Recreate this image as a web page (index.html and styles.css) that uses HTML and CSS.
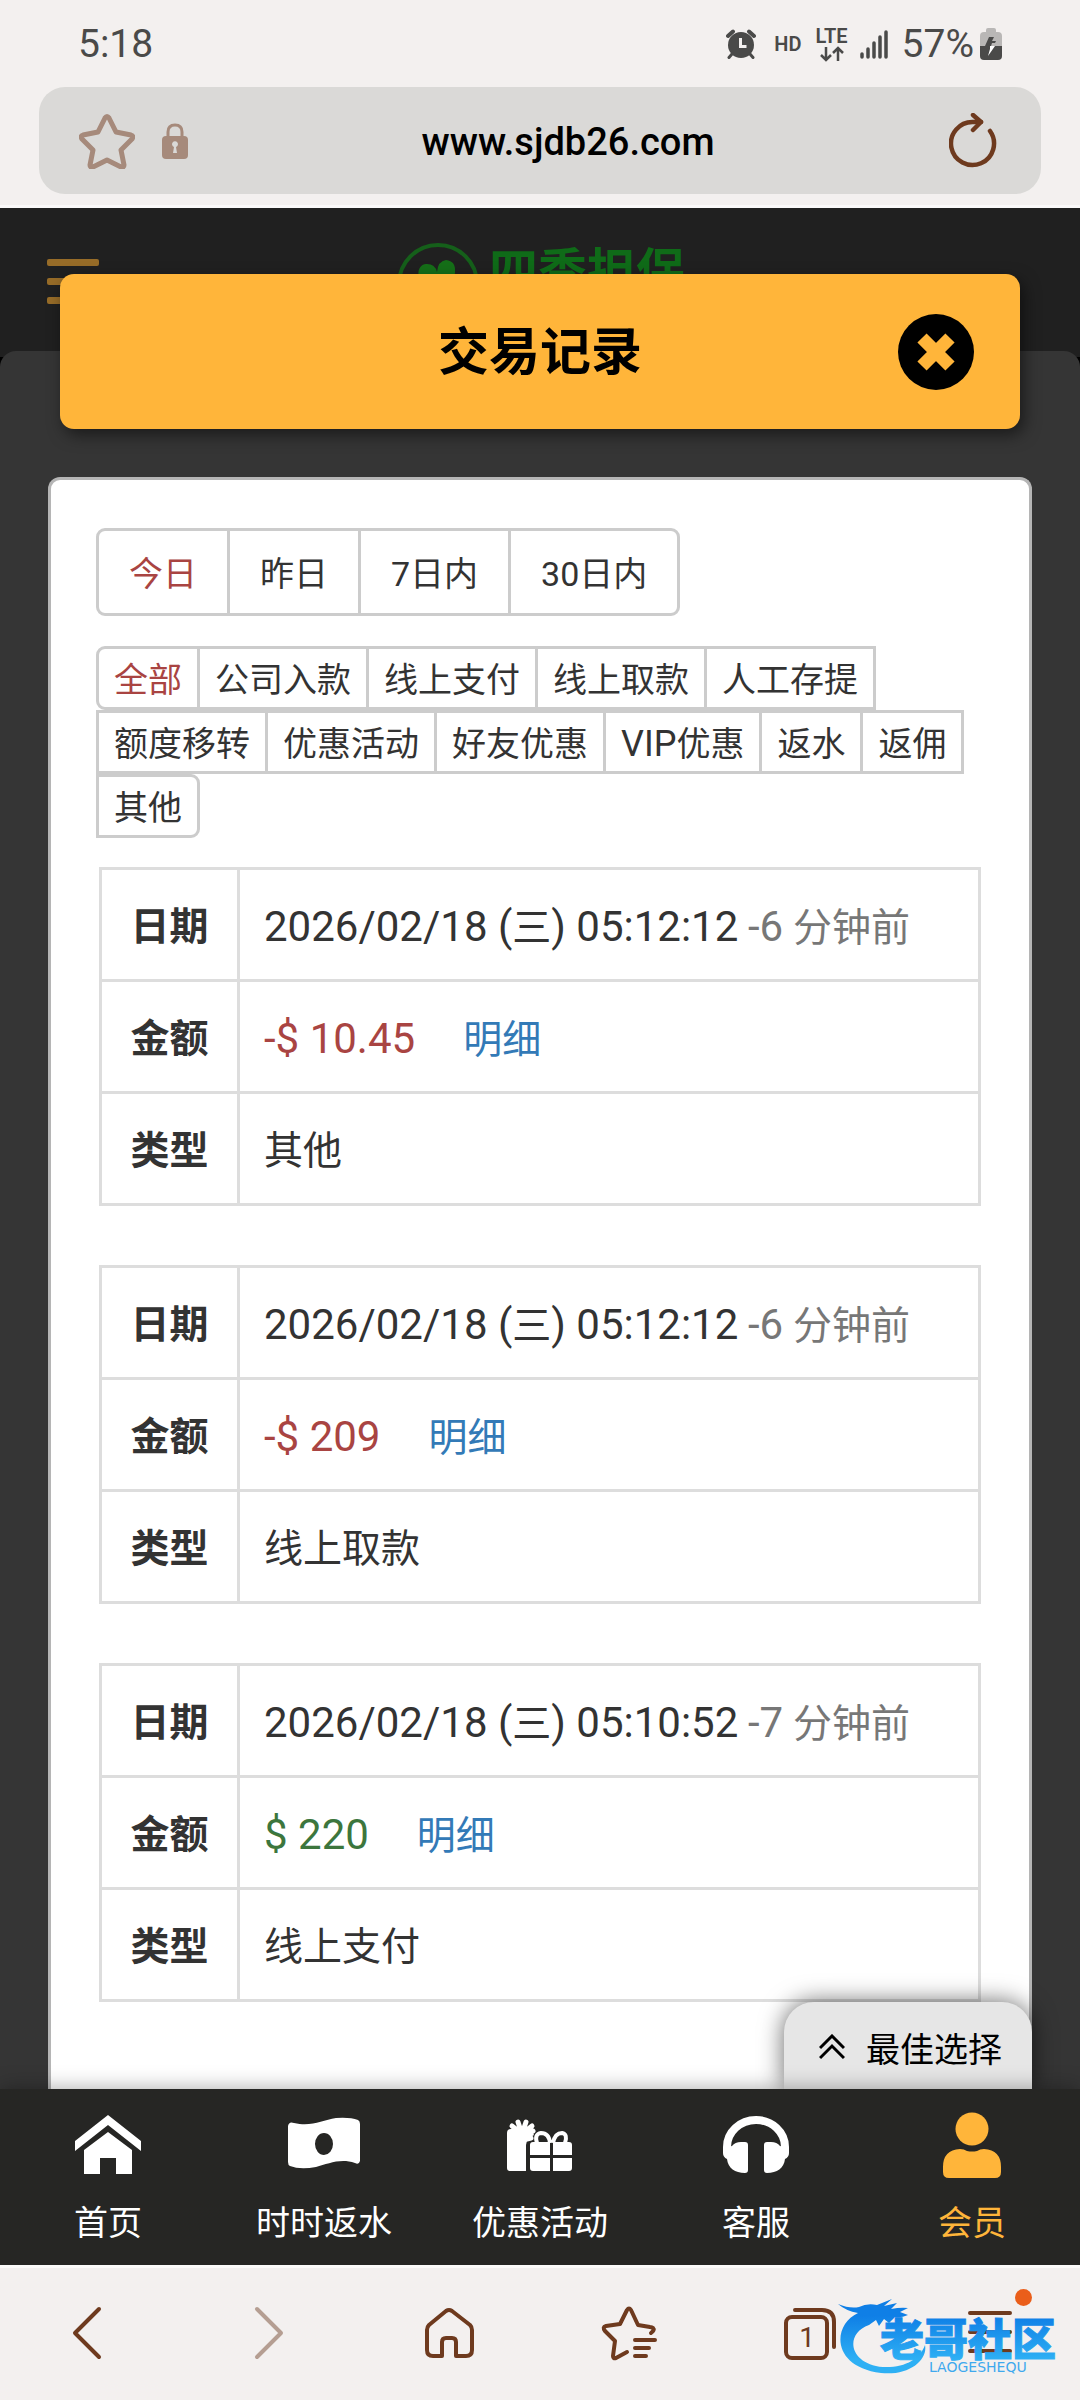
FILE: index.html
```html
<!DOCTYPE html>
<html lang="zh-CN">
<head>
  <meta charset="UTF-8">
  <meta name="viewport" content="width=device-width, initial-scale=1">
  <title>交易记录</title>
  <link rel="stylesheet" href="styles.css">
</head>
<body>
  <header class="browser-top">
    <div class="status-bar">
      <span class="clock">5:18</span>
      <div class="status-icons">
        <svg class="alarm" width="30" height="30" viewBox="0 0 30 30">
          <circle cx="15" cy="16" r="13" fill="#4a4a49"/>
          <path d="M2 7l5-4.500M28 7l-5-4.500" stroke="#4a4a49" stroke-width="4" stroke-linecap="round"/>
          <path d="M6 25l-3 3.500M24 25l3 3.500" stroke="#4a4a49" stroke-width="3" stroke-linecap="round"/>
          <path d="M14.500 9v8.500h6" fill="none" stroke="#f3f0ef" stroke-width="3"/>
        </svg>
        <span class="net">HD</span>
        <div class="lte">
          <span class="net">LTE</span>
          <svg width="26" height="16" viewBox="0 0 26 16" fill="none" stroke="#4a4a49" stroke-width="2.500">
            <path d="M7 1v13M2 9l5 5 5-5M19 15V2M14 7l5-5 5 5"/>
          </svg>
        </div>
        <svg class="signal" width="28" height="30" viewBox="0 0 28 30" stroke="#4a4a49" stroke-width="3.500" stroke-linecap="round">
          <path d="M2 25v3M8 20v8M14 14v14M20 8v20M26 3v25"/>
        </svg>
        <span class="percent">57%</span>
        <svg width="22" height="32" viewBox="0 0 22 32">
          <path d="M6 4V2q0-2 2-2h6q2 0 2 2v2h2q4 0 4 4v10H0V8q0-4 4-4z" fill="#b9b7b6"/>
          <path d="M0 18h22v10q0 4-4 4H4q-4 0-4-4z" fill="#4a4a49"/>
          <path d="M9 9l-4 9h6l1-3h3l1-2h-4l2-4z" fill="#4a4a49"/>
          <path d="M10 18h5l-7 10 2-7z" fill="#fff"/>
        </svg>
      </div>
    </div>
    <div class="address-bar">
      <button class="icon-btn" aria-label="收藏">
        <svg width="56" height="56" viewBox="0 0 56 56" fill="none" stroke="#a68a7b" stroke-width="5" stroke-linejoin="round">
          <path d="M26 5q2-3 4 0l7 14 15 3q3 1 1 4L42 37l3 15q0 3-3 2l-14-7-14 7q-3 1-3-2l3-15L3 26q-2-3 1-4l15-3z"/>
        </svg>
      </button>
      <svg class="lock" width="26" height="36" viewBox="0 0 26 36">
        <path d="M6 15V9q0-7 7-7t7 7v6" fill="none" stroke="#a68a7b" stroke-width="3"/>
        <rect y="13" width="26" height="23" rx="4" fill="#a68a7b"/>
        <path d="M11 30l1-6a3 3 0 1 1 2 0l1 6z" fill="#dad9d7"/>
      </svg>
      <input class="url" type="text" value="www.sjdb26.com" aria-label="网址">
      <button class="icon-btn" aria-label="刷新">
        <svg width="50" height="56" viewBox="0 0 50 56" fill="none" stroke="#6e3a1e" stroke-width="4.500" stroke-linecap="round" stroke-linejoin="round">
          <path d="M41 18a21.500 21.500 0 1 1-17-9h8"/><path d="M24 2l8 7-8 8"/>
        </svg>
      </button>
    </div>
  </header>

  <main class="site">
    <!-- 弹窗后面的页面 -->
    <div class="backdrop">
      <div class="site-header">
        <div class="burger"><i></i><i></i><i></i></div>
        <div class="logo">
          <svg width="82" height="82" viewBox="0 0 82 82">
            <circle cx="41" cy="41" r="39" fill="none" stroke="#155f1a" stroke-width="4"/>
            <path d="M41 46C16 44 18 20 30 21q8 0 10 8 1-11 9-12 10 1 9 12 0 4-2 5 8 6 0 14-10 6-15-2z" fill="#156f18"/>
          </svg>
          <span>四季担保</span>
        </div>
      </div>
      <div class="site-body"></div>
    </div>

    <section class="modal">
      <div class="modal-title">
        <h1>交易记录</h1>
        <button class="close" aria-label="关闭">
          <svg width="76" height="76" viewBox="0 0 76 76">
            <circle cx="38" cy="38" r="38"/>
            <path d="M24 24l28 28M52 24L24 52" stroke="#ffb53a" stroke-width="13"/>
          </svg>
        </button>
      </div>

      <div class="panel">
        <div class="btn-group period">
          <button class="btn active">今日</button>
          <button class="btn">昨日</button>
          <button class="btn">7日内</button>
          <button class="btn">30日内</button>
        </div>
        <div class="btn-group types">
          <button class="btn active">全部</button>
          <button class="btn">公司入款</button>
          <button class="btn">线上支付</button>
          <button class="btn">线上取款</button>
          <button class="btn">人工存提</button>
          <button class="btn">额度移转</button>
          <button class="btn">优惠活动</button>
          <button class="btn">好友优惠</button>
          <button class="btn"><span class="latin">VIP</span>优惠</button>
          <button class="btn">返水</button>
          <button class="btn">返佣</button>
          <button class="btn">其他</button>
        </div>

        <table class="record">
          <tr><th>日期</th><td><span class="num">2026/02/18 (</span>三<span class="num">) 05:12:12</span> <span class="ago"><span class="num">-6</span> 分钟前</span></td></tr>
          <tr><th>金额</th><td><span class="num minus">-$ 10.45</span><a class="detail" href="#">明细</a></td></tr>
          <tr><th>类型</th><td>其他</td></tr>
        </table>
        <table class="record">
          <tr><th>日期</th><td><span class="num">2026/02/18 (</span>三<span class="num">) 05:12:12</span> <span class="ago"><span class="num">-6</span> 分钟前</span></td></tr>
          <tr><th>金额</th><td><span class="num minus">-$ 209</span><a class="detail" href="#">明细</a></td></tr>
          <tr><th>类型</th><td>线上取款</td></tr>
        </table>
        <table class="record">
          <tr><th>日期</th><td><span class="num">2026/02/18 (</span>三<span class="num">) 05:10:52</span> <span class="ago"><span class="num">-7</span> 分钟前</span></td></tr>
          <tr><th>金额</th><td><span class="num plus">$ 220</span><a class="detail" href="#">明细</a></td></tr>
          <tr><th>类型</th><td>线上支付</td></tr>
        </table>
      </div>
    </section>

    <button class="best">
      <svg width="26" height="26" viewBox="0 0 26 26" fill="none" stroke="#000" stroke-width="3">
        <path d="M1 14L13 2l12 12M1 24l12-12 12 12"/>
      </svg>
      最佳选择
    </button>
  </main>

  <nav class="tab-bar">
    <a href="#">
      <svg width="66" height="66" viewBox="0 0 66 66" fill="#fff">
        <path d="M33 3l33 26v10L33 13 0 39V29z"/>
        <path d="M33 20l24 18v24H41V46H25v16H9V38z"/>
      </svg>
      首页
    </a>
    <a href="#">
      <svg width="72" height="66" viewBox="0 0 72 66" fill="#fff">
        <path fill-rule="evenodd" d="M0 14q1-5 6-3c18 4 28-3 42-5q14-1 22 2 2 1 2 4v37q-1 4-5 2c-15-5-27 1-39 4q-16 3-26-1-2-1-2-4zM36 21a9 11 0 1 0 0 22a9 11 0 0 0 0-22z"/>
      </svg>
      时时返水
    </a>
    <a href="#">
      <svg width="66" height="66" viewBox="0 0 66 66" fill="#fff">
        <path d="M0 21q0-4 4-4h20l3 6-5 3q-3 3-3 7v26H3q-3 0-3-3z"/>
        <path d="M15 22L5 14M15 22L11 10M15 22l4-12M15 22l10-8M14 26l12-7M16 28l8-2" stroke="#fff" stroke-width="5" stroke-linecap="round"/>
        <path d="M30 31q-3-9 4-10 8 0 9 10M46 31q2-10 9-10 6 1 3 10" fill="none" stroke="#fff" stroke-width="4"/>
        <path d="M26 30h17v13H23V33q0-3 3-3zM46 30h16q3 0 3 3v10H46zM23 46h20v13H26q-3 0-3-3zM46 46h19v10q0 3-3 3H46z"/>
      </svg>
      优惠活动
    </a>
    <a href="#">
      <svg width="66" height="66" viewBox="0 0 66 66" fill="#fff">
        <path d="M4 40v-5a29 27 0 0 1 58 0v5" fill="none" stroke="#fff" stroke-width="8"/>
        <path d="M0 36l9-2q3-4 9-4h4q3 0 3 3v25q0 3-3 3C12 61 5 56 4 47q-4-2-4-6zM66 36l-9-2q-3-4-9-4h-4q-3 0-3 3v25q0 3 3 3c10 0 17-5 18-14q4-2 4-6z"/>
      </svg>
      客服
    </a>
    <a href="#" class="current">
      <svg width="58" height="66" viewBox="0 0 58 66" fill="#ffb53a">
        <circle cx="29" cy="17" r="16.500"/>
        <path d="M17 37q4 0 7 2 5 1 10 0 3-2 7-2 17 1 17 18v5q0 6-6 6H6q-6 0-6-6v-5q0-17 17-18z"/>
      </svg>
      会员
    </a>
  </nav>

  <footer class="browser-bottom">
    <button class="icon-btn" aria-label="后退">
      <svg width="56" height="56" viewBox="0 0 56 56"><path d="M39 4L15 28l24 24"/></svg>
    </button>
    <button class="icon-btn forward" aria-label="前进">
      <svg width="56" height="56" viewBox="0 0 56 56"><path d="M17 4l24 24-24 24"/></svg>
    </button>
    <button class="icon-btn" aria-label="主页">
      <svg width="56" height="56" viewBox="0 0 56 56"><path d="M25 6q3-2 6 0l18 14q2 2 2 5v20q0 6-6 6H35V37q0-4-4-4h-6q-4 0-4 4v14H12q-6 0-6-6V25q0-3 2-5z"/></svg>
    </button>
    <button class="icon-btn" aria-label="书签">
      <svg width="56" height="56" viewBox="0 0 56 56"><path d="M50 28q4-3 2-5-1-1-3-1l-12-2-7-15q-2-3-4 0l-7 14-14 2q-4 1-1 5l10 10-2 15q0 3 3 2l11-6M34 35h20M34 43h14M34 51h11"/></svg>
    </button>
    <button class="icon-btn" aria-label="标签页">
      <svg width="56" height="56" viewBox="0 0 56 56">
        <rect x="4" y="12" width="41" height="41" rx="6"/>
        <path d="M13 5h27q12 0 12 12v25"/>
        <text x="25" y="42">1</text>
      </svg>
    </button>
    <button class="icon-btn menu" aria-label="菜单">
      <svg width="56" height="56" viewBox="0 0 56 56"><path d="M8 8h40M8 27h40M8 46h40"/></svg>
    </button>
    <svg class="watermark" width="228" height="80" viewBox="0 0 228 80">
      <defs>
        <linearGradient id="blue" x1="0" y1="0" x2="0" y2="80" gradientUnits="userSpaceOnUse">
          <stop offset="0.250" stop-color="#0f7fe6"/>
          <stop offset="0.800" stop-color="#2eb0f4"/>
        </linearGradient>
      </defs>
      <path d="M0 8q12 5 21 3 8-4 18-2l15-6-8 7 13-3-6 6q10-2 17-1l-8 4 8 3q-7 3-13 2l-6 6-5-4-5 7-3-6-7 5C6 38 11 68 45 71c22 1 37-8 42-22 3 15-16 31-44 28C-7 71-6 29 20 17Q8 15 0 8z" fill="url(#blue)"/>
      <text class="mark-name" x="42" y="60">老哥社区</text>
      <text class="mark-latin" x="91" y="76">LAOGESHEQU</text>
    </svg>
  </footer>
</body>
</html>
```
FILE: styles.css
```css
* {
  box-sizing: border-box;
}
body {
  margin: 0;
  min-height: 100vh;
  display: flex;
  flex-direction: column;
  background: #f3f0ef;
  color: #333;
  font-family: Roboto, "Noto Sans CJK SC", sans-serif;
  font-size: 34px;
}
button {
  font: inherit;
  color: inherit;
  margin: 0;
  padding: 0;
  border: 0;
  background: none;
}
svg {
  display: block;
  flex-shrink: 0;
}
a {
  text-decoration: none;
}

/* 浏览器顶部 */
.browser-top {
  height: 208px;
  border-bottom: 3px solid #faf9f9;
}
.status-bar {
  height: 87px;
  padding: 0 78px;
  display: flex;
  justify-content: space-between;
  align-items: center;
  font-size: 39px;
  color: #4a4a49;
}
.status-icons {
  display: flex;
  align-items: center;
}
.net {
  font-size: 20px;
  line-height: 20px;
  font-weight: 600;
}
.alarm {
  margin-right: 18px;
}
.lte {
  display: flex;
  flex-direction: column;
  align-items: center;
  margin: 0 12px 0 14px;
}
.percent {
  margin: 0 6px 0 14px;
}
.address-bar {
  height: 107px;
  margin: 0 39px;
  padding: 0 42px 0 40px;
  border-radius: 26px;
  background: #dad9d7;
  display: flex;
  align-items: center;
}
.lock {
  margin-left: 27px;
}
.url {
  flex: 1;
  min-width: 0;
  margin: 0 24px 0 0;
  padding: 2px 0 0 23px;
  border: 0;
  background: none;
  color: #000;
  font-family: Roboto, sans-serif;
  font-size: 38px;
  font-weight: 500;
  text-align: center;
}

/* 网站 */
.site {
  flex: 1;
  display: grid;
  position: relative;
  overflow: hidden;
  background: #000;
}
.backdrop,
.modal {
  grid-area: 1 / 1;
  min-width: 0;
}
.backdrop {
  display: flex;
  flex-direction: column;
}
.site-header {
  height: 149px;
  margin-bottom: -6px;
  padding: 32px 47px 0;
  background: #202020;
  display: flex;
}
.burger {
  margin-top: 19px;
  width: 52px;
}
.burger i {
  display: block;
  height: 7px;
  margin-bottom: 12px;
  border-radius: 2px;
  background: #976c28;
}
.logo {
  flex: 1;
  margin-right: 50px;
  padding-top: 3px;
  display: flex;
  justify-content: center;
  gap: 10px;
  color: #0f6b18;
  font-size: 49px;
  line-height: 60px;
  font-weight: 700;
}
.site-body {
  flex: 1;
  border-radius: 16px 16px 0 0;
  background: #353535;
}

/* 弹窗 */
.modal {
  position: relative;
  display: flex;
  flex-direction: column;
  padding: 66px 48px 0;
}
.modal-title {
  height: 155px;
  margin: 0 12px 48px;
  padding: 0 46px;
  border-radius: 14px;
  background: #ffb53a;
  box-shadow: 4px 6px 16px rgba(0, 0, 0, 0.5);
  display: flex;
  align-items: center;
  color: #000;
}
.modal-title h1 {
  flex: 1;
  margin: 0 0 8px 76px;
  font-size: 51px;
  font-weight: 700;
  text-align: center;
}
.panel {
  flex: 1;
  padding: 48px 48px 87px;
  border: 3px solid #b5b5b5;
  border-bottom: 0;
  border-radius: 12px 12px 0 0;
  background: #fff;
}
.btn-group {
  display: flex;
  flex-wrap: wrap;
  margin: 0 0 30px -3px;
}
.types {
  margin-bottom: 29px;
}
.btn {
  height: 64px;
  margin-right: -3px;
  padding: 4px 15px 0;
  border: 3px solid #ccc;
  line-height: 54px;
}
.period .btn {
  height: 88px;
  padding: 4px 30px 0;
  line-height: 78px;
}
.btn:first-child {
  border-radius: 9px 0 0 9px;
}
.btn:last-child {
  border-radius: 0 9px 9px 0;
}
.latin {
  font-size: 36px;
}
.active {
  color: #a94442;
}
.record {
  width: 100%;
  margin-bottom: 59px;
  border-collapse: collapse;
  font-size: 39px;
}
.record:last-child {
  margin-bottom: 0;
}
.record th,
.record td {
  height: 112px;
  padding: 5px 0 0;
  border: 3px solid #ddd;
  line-height: 56px;
}
.record th {
  width: 138px;
  text-align: center;
}
.record td {
  padding-left: 24px;
}
.num {
  font-size: 42px;
}
.ago {
  color: #777;
}
.minus {
  color: #a94442;
}
.plus {
  color: #3c763d;
}
.detail {
  margin-left: 48px;
  color: #337ab7;
}
.best {
  position: absolute;
  right: 48px;
  bottom: 0;
  width: 248px;
  height: 87px;
  padding: 3px 0 0 5px;
  border-radius: 30px 30px 0 0;
  background: #e6e6e6;
  box-shadow: 0 0 24px rgba(0, 0, 0, 0.6);
  color: #000;
  display: flex;
  align-items: center;
  justify-content: center;
  gap: 21px;
}

/* 底部导航 */
.tab-bar {
  position: relative;
  height: 176px;
  padding: 23px 0 16px;
  background: #262624;
  box-shadow: 0 0 20px rgba(0, 0, 0, 0.35);
  display: flex;
}
.tab-bar a {
  flex: 1;
  display: flex;
  flex-direction: column;
  align-items: center;
  gap: 20px;
  color: #fff;
  line-height: 50px;
}
.tab-bar .current {
  color: #ffb53a;
}

/* 浏览器底部 */
.browser-bottom {
  position: relative;
  height: 135px;
  padding: 0 62px 3px 60px;
  border-top: 3px solid #fbfaf9;
  background: #f3f0ef;
  display: flex;
  justify-content: space-between;
  align-items: center;
}
.browser-bottom .icon-btn svg {
  fill: none;
  stroke: #6e3a1e;
  stroke-width: 4;
  stroke-linecap: round;
  stroke-linejoin: round;
}
.browser-bottom .forward svg {
  stroke: #b59e92;
}
.icon-btn text {
  font-size: 28px;
  text-anchor: middle;
  fill: #6e3a1e;
  stroke: none;
}
.menu {
  position: relative;
}
.menu::after {
  content: "";
  position: absolute;
  top: -16px;
  right: -14px;
  width: 17px;
  height: 17px;
  border-radius: 50%;
  background: #ea5e1a;
}
.watermark {
  position: absolute;
  right: 14px;
  bottom: 24px;
}
.mark-name {
  font-size: 44px;
  font-weight: 900;
  fill: url(#blue);
  stroke: url(#blue);
  stroke-width: 1;
}
.mark-latin {
  font-family: "DejaVu Sans", sans-serif;
  font-size: 14px;
  fill: #3fa9ee;
}
```
